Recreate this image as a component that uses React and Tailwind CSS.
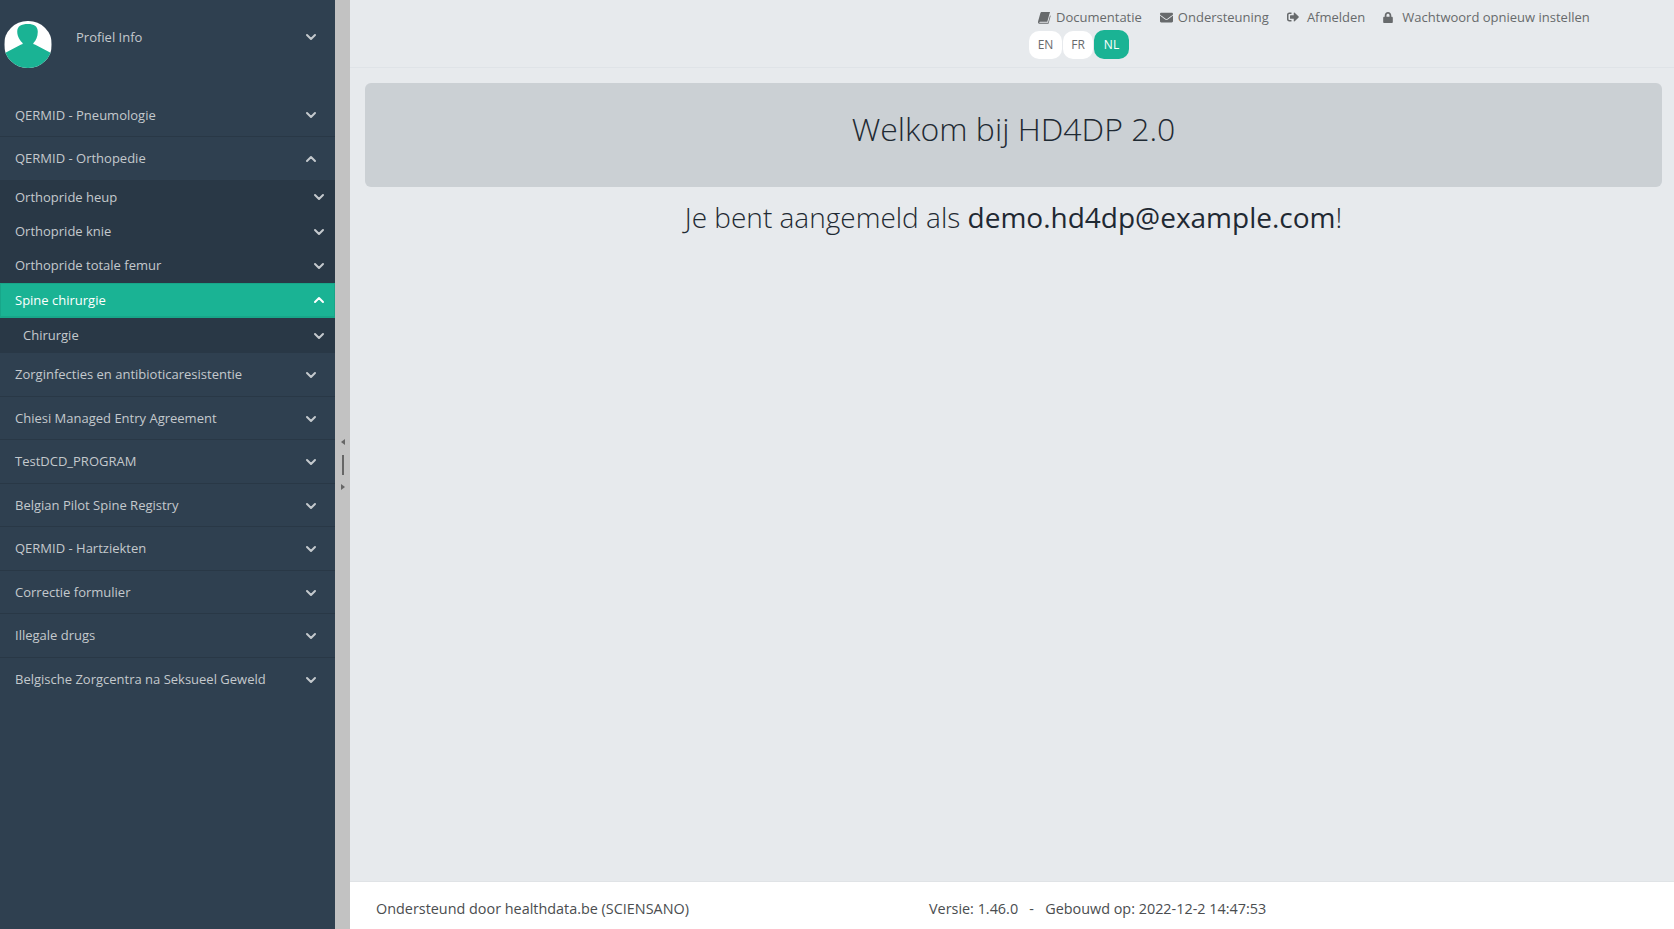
import { ChevronDown, ChevronUp } from 'lucide-react';
import { FaEnvelope, FaLock, FaSignOutAlt } from 'react-icons/fa';

const topItems = [
  'Zorginfecties en antibioticaresistentie',
  'Chiesi Managed Entry Agreement',
  'TestDCD_PROGRAM',
  'Belgian Pilot Spine Registry',
  'QERMID - Hartziekten',
  'Correctie formulier',
  'Illegale drugs',
];

const subItems = ['Orthopride heup', 'Orthopride knie', 'Orthopride totale femur'];

const NavItem = ({ label, last }) => (
  <div className={`h-[43.5px] flex items-center justify-between pt-[1px] pl-[15px] pr-[16px] text-[13px] text-[#c4c9cd] ${last ? '' : 'border-b border-[#293846]'}`}>
    <span>{label}</span>
    <ChevronDown className="w-[16px] h-[16px]" strokeWidth={3} />
  </div>
);

const SubItem = ({ label }) => (
  <div className="h-[34.4px] flex items-center justify-between pl-[15px] pr-[8px] text-[13px] text-[#c4c9cd]">
    <span>{label}</span>
    <ChevronDown className="w-[16px] h-[16px]" strokeWidth={3} />
  </div>
);

const Avatar = () => (
  <svg viewBox="0 0 48 48" className="w-[48px] h-[47px] rounded-full">
    <rect width="48" height="48" fill="#ffffff" />
    <path d="M24 3c6 0 10 2 10 8 0 5-2 9-4 11-1 1-1 2 1 2l17 9v15H0V33l17-9c2 0 2-1 1-2-2-2-5-6-5-11 0-6 4-8 11-8z" fill="#1ab394" />
  </svg>
);

const BookIcon = () => (
  <svg viewBox="0 0 14 14" className="w-[13px] h-[13px]" fill="currentColor">
    <path d="M4 1h9l-.4 1.2-2.6 9.3H2.2c-.5 0-.8.3-.8.6 0 .4.3.6.8.6h8.6l2.2-8 .6.6-2.3 8.5H2.2C1 13.8 0 13 0 12c0-.4.1-.8.2-1.2L2.6 2.2C2.8 1.5 3.3 1 4 1z" />
  </svg>
);

const TopLink = ({ icon, label, className }) => (
  <span className={`flex items-center ${className}`}>
    {icon}
    <span>{label}</span>
  </span>
);

export default function App() {
  return (
    <div className="h-[929px] flex bg-[#e7eaed] overflow-hidden" style={{ fontFamily: '"Open Sans", sans-serif' }}>
      <aside className="w-[335px] shrink-0 bg-[#2f4050]">
        <div className="h-[93.7px] pt-[21px] pl-[4px] pr-[16px] flex items-start text-[13px] text-[#c4c9cd]">
          <Avatar />
          <span className="ml-[24px] mt-[7px]">Profiel Info</span>
          <ChevronDown className="ml-auto mt-[8px] w-[16px] h-[16px]" strokeWidth={3} />
        </div>
        <NavItem label="QERMID - Pneumologie" />
        <div className="h-[43px] flex items-center justify-between pl-[15px] pr-[16px] text-[13px] text-[#c4c9cd]">
          <span>QERMID - Orthopedie</span>
          <ChevronUp className="w-[16px] h-[16px]" strokeWidth={3} />
        </div>
        <div className="bg-[#293846]">
          {subItems.map((s) => (
            <SubItem key={s} label={s} />
          ))}
          <div className="h-[35px] flex items-center justify-between pl-[14px] pr-[7px] bg-[#1ab394] border border-[#18a689] border-b-2 text-[13px] text-white">
            <span>Spine chirurgie</span>
            <ChevronUp className="w-[16px] h-[16px]" strokeWidth={3} />
          </div>
          <div className="h-[34.9px] flex items-center justify-between pl-[23px] pr-[8px] text-[13px] text-[#c4c9cd]">
            <span>Chirurgie</span>
            <ChevronDown className="w-[16px] h-[16px]" strokeWidth={3} />
          </div>
        </div>
        {topItems.map((t) => (
          <NavItem key={t} label={t} />
        ))}
        <NavItem label="Belgische Zorgcentra na Seksueel Geweld" last />
      </aside>

      <div className="w-[15px] shrink-0 bg-[#c2c2c2] flex flex-col items-center justify-center">
        <span className="w-0 h-0 border-y-[3px] border-y-transparent border-r-[4px] border-r-[#666666]" />
        <span className="w-[2px] h-[20px] bg-[#666666] mt-[10px] mb-[9px]" />
        <span className="w-0 h-0 border-y-[3px] border-y-transparent border-l-[4px] border-l-[#666666]" />
      </div>

      <main className="flex-1 flex flex-col min-w-0">
        <header className="h-[68px] border-b border-[#dfe3e7] pl-[679px] pt-[8px]">
          <div className="flex text-[13px] leading-[18px] text-[#676a6c] pl-[9px]">
            <TopLink className="mr-[18px] gap-[5px]" icon={<BookIcon />} label="Documentatie" />
            <TopLink className="mr-[18px] gap-[5px]" icon={<FaEnvelope className="w-[13px] h-[13px]" />} label="Ondersteuning" />
            <TopLink className="mr-[18px] gap-[8px]" icon={<FaSignOutAlt className="w-[12px] h-[12px]" />} label="Afmelden" />
            <TopLink className="gap-[9px]" icon={<FaLock className="w-[10px] h-[11px]" />} label="Wachtwoord opnieuw instellen" />
          </div>
          <div className="flex items-center mt-[4px] text-[12px] text-[#676a6c]">
            <span className="w-[33px] h-[28px] flex items-center justify-center bg-white rounded-[10px] mr-[1px]">EN</span>
            <span className="w-[30px] h-[28px] flex items-center justify-center bg-white rounded-[10px] mr-[1px]">FR</span>
            <span className="w-[35px] h-[29px] flex items-center justify-center bg-[#1ab394] text-white rounded-[10px]">NL</span>
          </div>
        </header>

        <div className="flex-1 pl-[15px] pr-[12px] pt-[15px]">
          <div className="h-[104px] bg-[#cbd0d4] rounded-[6px] flex justify-center pt-[24px]">
            <h1 className="text-[32px] leading-[44px] font-light text-[#1f2a33]">Welkom bij HD4DP 2.0</h1>
          </div>
          <p className="mt-[11px] text-center text-[28px] leading-[38px] font-light text-[#1f2a33]">
            Je bent aangemeld als <span className="font-normal text-[#1f2933]">demo.hd4dp@example.com</span>!
          </p>
        </div>

        <footer className="h-[48px] shrink-0 bg-white border-t border-[#e0e3e6] flex items-center pl-[26px] pt-[7px] text-[14.4px] text-[#4a4d4f]">
          <span className="w-[553px]">Ondersteund door healthdata.be (SCIENSANO)</span>
          <span>Versie: 1.46.0&nbsp;&nbsp;&nbsp;-&nbsp;&nbsp;&nbsp;Gebouwd op: 2022-12-2 14:47:53</span>
        </footer>
      </main>
    </div>
  );
}
